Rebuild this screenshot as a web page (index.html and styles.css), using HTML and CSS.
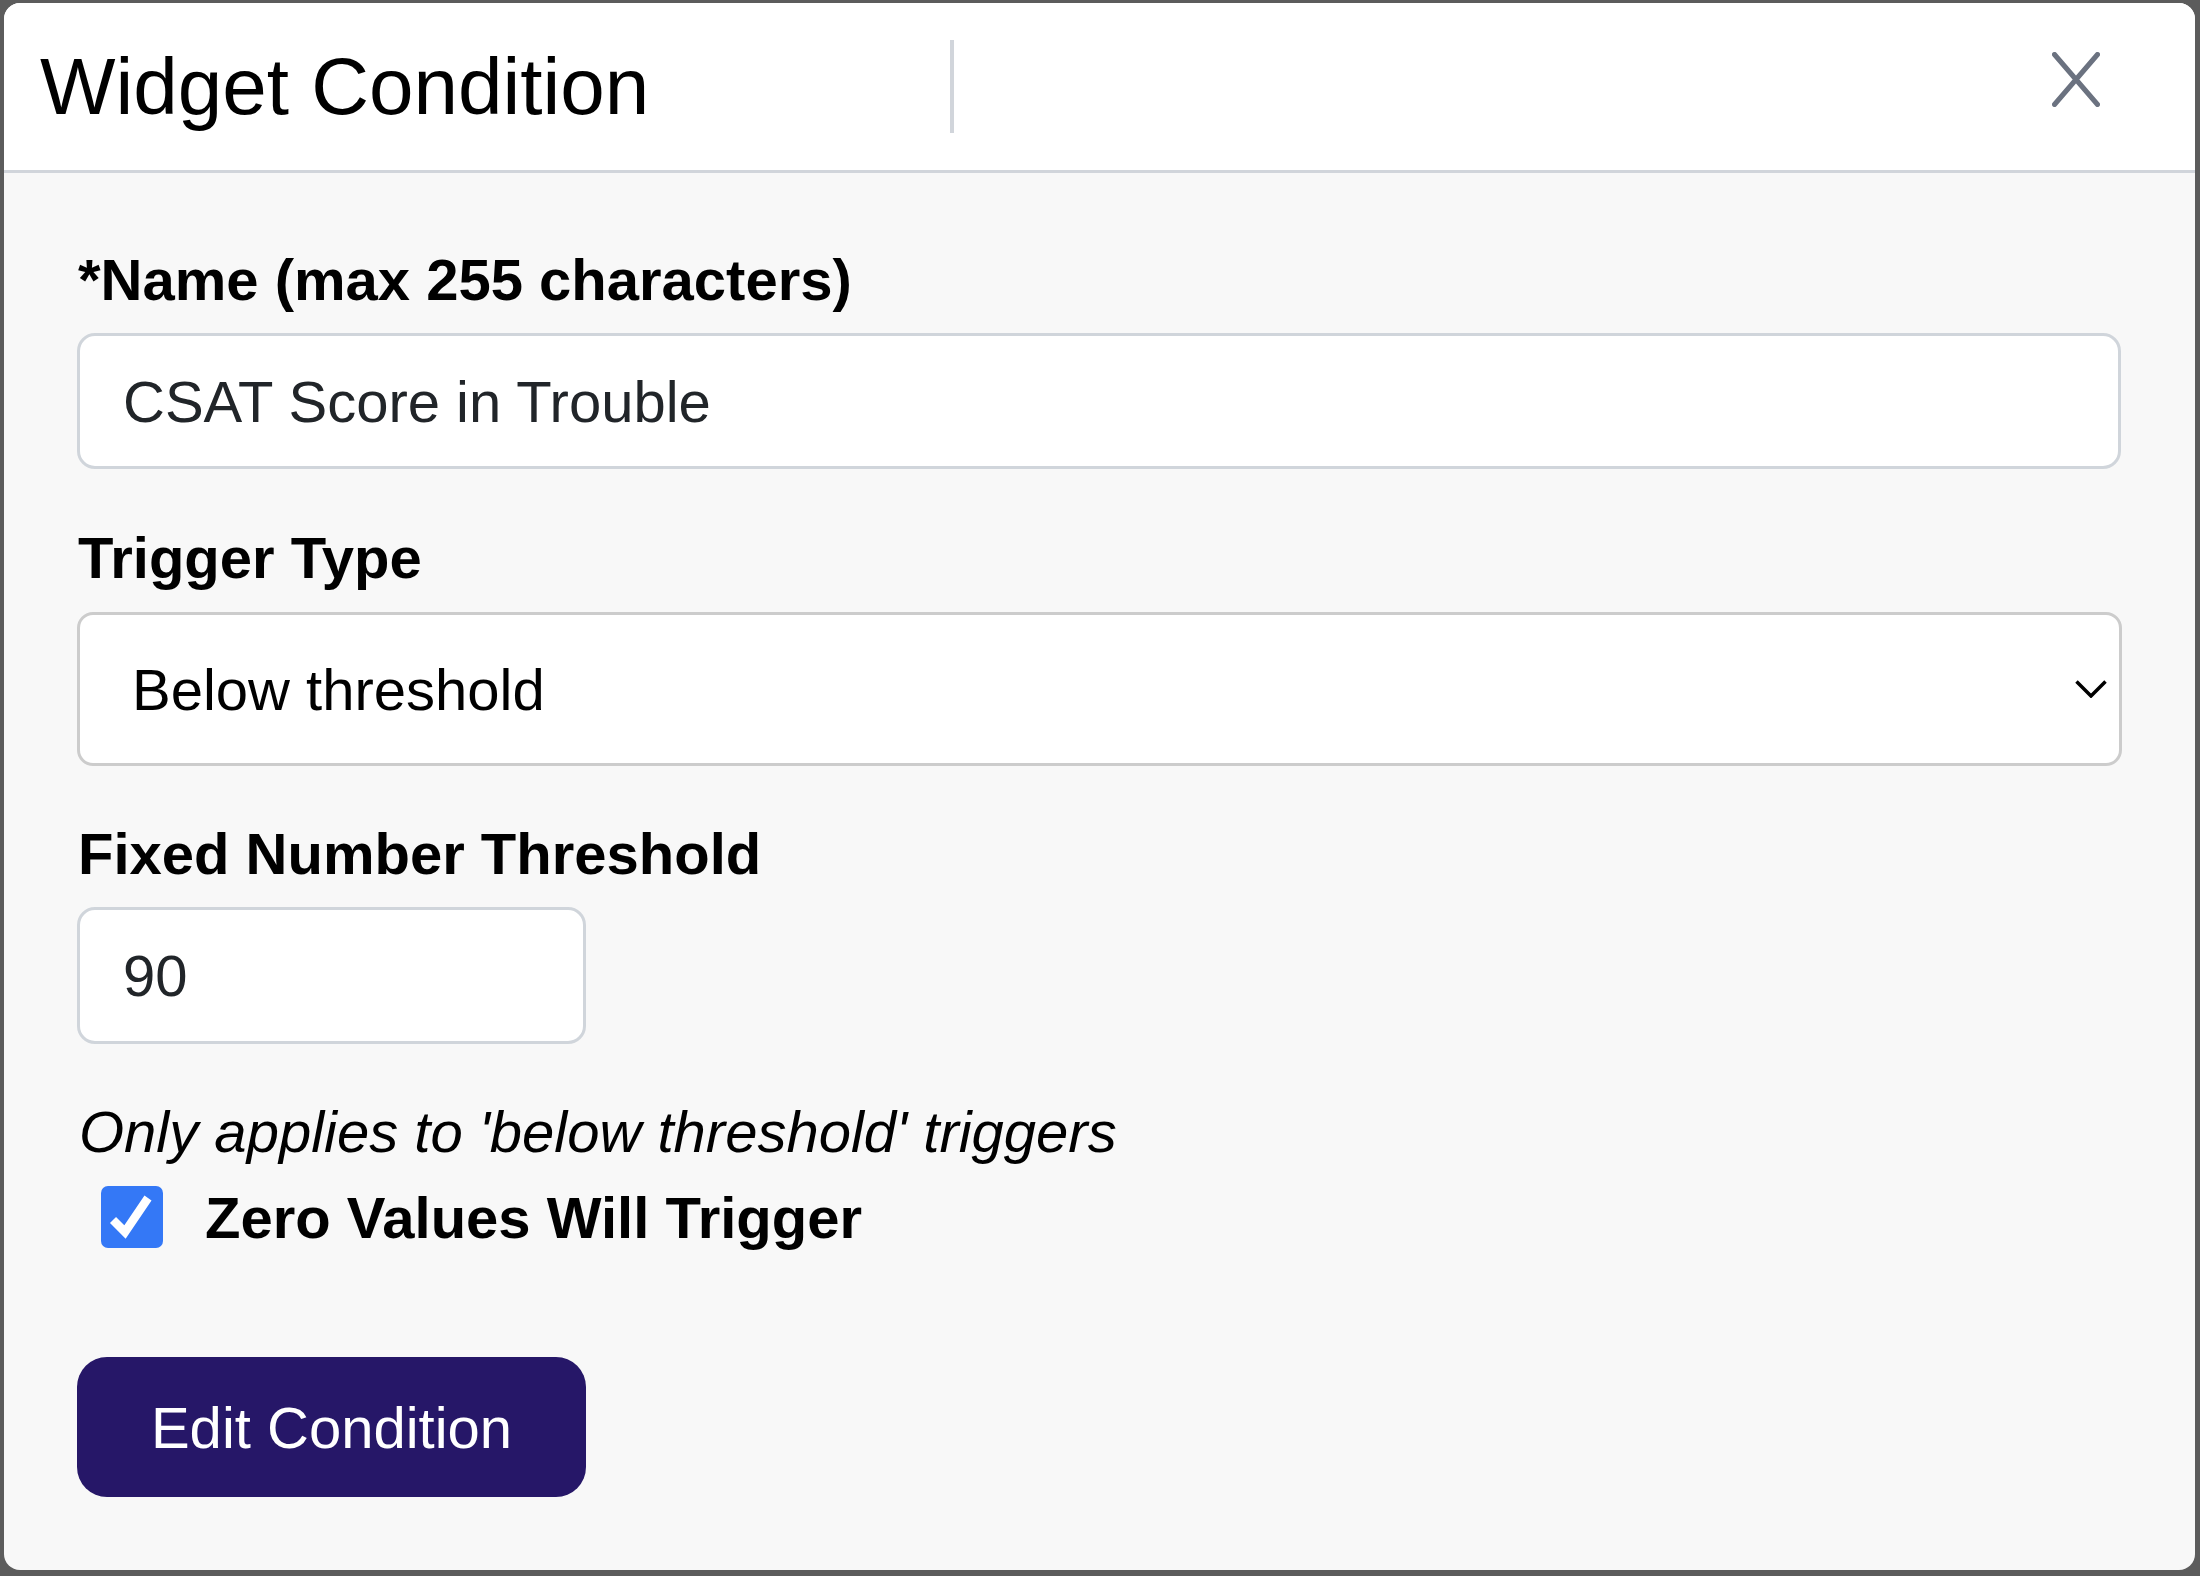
FILE: index.html
```html
<!DOCTYPE html>
<html lang="en">
<head>
<meta charset="utf-8">
<title>Widget Condition</title>
<link rel="stylesheet" href="styles.css">
</head>
<body>
<div class="backdrop">
  <div class="modal">
    <div class="modal-header">
      <div class="modal-title">Widget Condition</div>
      <button class="close-btn" aria-label="Close">
        <svg width="48" height="55" viewBox="0 0 48 55">
          <path d="M2.5 2.5 L45.5 52.5 M45.5 2.5 L2.5 52.5" stroke="#6b7280" stroke-width="5" stroke-linecap="round" fill="none"/>
        </svg>
      </button>
    </div>
    <div class="modal-body">
      <div class="group">
        <label class="field-label">*Name (max 255 characters)</label>
        <input class="text-input wide" type="text" value="CSAT Score in Trouble">
      </div>
      <div class="group">
        <label class="field-label gap19">Trigger Type</label>
        <div class="select-wrap">
          <select class="select">
            <option>Below threshold</option>
          </select>
          <svg class="chevron" width="32" height="18" viewBox="0 0 32 18">
            <polyline points="1.5,1.5 16,16 30.5,1.5" stroke="#000" stroke-width="3.5" fill="none"/>
          </svg>
        </div>
      </div>
      <div class="group">
        <label class="field-label">Fixed Number Threshold</label>
        <input class="text-input short" type="text" value="90">
      </div>
      <div class="hint">Only applies to 'below threshold' triggers</div>
      <label class="check-row">
        <span class="checkbox">
          <svg width="62" height="62" viewBox="0 0 62 62">
            <polyline points="12,34 24,46 47,12" stroke="#fff" stroke-width="8.5" fill="none" stroke-linejoin="miter"/>
          </svg>
        </span>
        <span class="check-text">Zero Values Will Trigger</span>
      </label>
      <button class="primary-btn">Edit Condition</button>
    </div>
  </div>
</div>
</body>
</html>
```

FILE: styles.css
```css
html, body {
  margin: 0;
  padding: 0;
}

body {
  background: #5c5c5c;
  font-family: "Liberation Sans", Arial, Helvetica, sans-serif;
  width: 2200px;
  height: 1576px;
  overflow: hidden;
}

.backdrop {
  padding: 3px 5px 0 4px;
}

.modal {
  width: 2191px;
  border-radius: 16px;
  overflow: hidden;
  background: #f8f8f8;
  display: flex;
  flex-direction: column;
}

.modal-header {
  background: #ffffff;
  height: 167px;
  border-bottom: 3px solid #d1d5db;
  display: flex;
  align-items: center;
  justify-content: space-between;
  padding: 0 95px 0 36px;
}

.modal-title {
  box-sizing: border-box;
  width: 914px;
  height: 93px;
  line-height: 93px;
  font-size: 80px;
  color: #000;
  border-right: 4px solid #d1d5db;
  white-space: nowrap;
}

.close-btn {
  align-self: flex-start;
  margin-top: 49px;
  padding: 0;
  border: none;
  background: transparent;
  width: 48px;
  height: 55px;
  display: block;
}

.close-btn svg {
  display: block;
}

.modal-body {
  padding: 72px 74px 73px 73px;
  display: flex;
  flex-direction: column;
  align-items: flex-start;
}

.group {
  width: 100%;
  margin-bottom: 53px;
  display: flex;
  flex-direction: column;
}

.group:first-child {
  margin-bottom: 54px;
}

.field-label {
  display: block;
  font-size: 58px;
  line-height: 70px;
  font-weight: bold;
  color: #000;
  margin: 0 0 18px 1px;
}

.field-label.gap19 {
  margin-bottom: 19px;
}

.text-input {
  box-sizing: border-box;
  font-family: "Liberation Sans", Arial, Helvetica, sans-serif;
  font-size: 58px;
  color: #212529;
  background: #fff;
  border: 3px solid #d0d5db;
  border-radius: 18px;
  padding: 0 43px;
  outline: none;
  margin: 0;
}

.text-input.wide {
  width: 2044px;
  height: 136px;
}

.text-input.short {
  width: 509px;
  height: 137px;
}

.select-wrap {
  position: relative;
  width: 2045px;
  height: 154px;
}

.select {
  box-sizing: border-box;
  width: 100%;
  height: 100%;
  -webkit-appearance: none;
  appearance: none;
  font-family: "Liberation Sans", Arial, Helvetica, sans-serif;
  font-size: 58px;
  color: #000;
  background: #fff;
  border: 3px solid #cccccc;
  border-radius: 16px;
  padding: 0 52px;
  outline: none;
  margin: 0;
}

.chevron {
  position: absolute;
  right: 15px;
  top: 68px;
  pointer-events: none;
}

.hint {
  font-size: 58px;
  line-height: 70px;
  font-style: italic;
  color: #000;
  margin: 0 0 15px 2px;
  white-space: nowrap;
}

.check-row {
  display: flex;
  align-items: center;
  height: 70px;
  margin-bottom: 105px;
  padding-left: 24px;
}

.checkbox {
  width: 62px;
  height: 62px;
  border-radius: 7px;
  background: #3478f6;
  display: block;
  flex: none;
}

.checkbox svg {
  display: block;
}

.check-text {
  font-size: 58px;
  font-weight: bold;
  color: #000;
  margin-left: 42px;
  white-space: nowrap;
}

.primary-btn {
  box-sizing: border-box;
  width: 509px;
  height: 140px;
  border: none;
  border-radius: 30px;
  background: #261768;
  color: #fff;
  font-family: "Liberation Sans", Arial, Helvetica, sans-serif;
  font-size: 58px;
  padding: 0;
  margin: 0;
}
```
